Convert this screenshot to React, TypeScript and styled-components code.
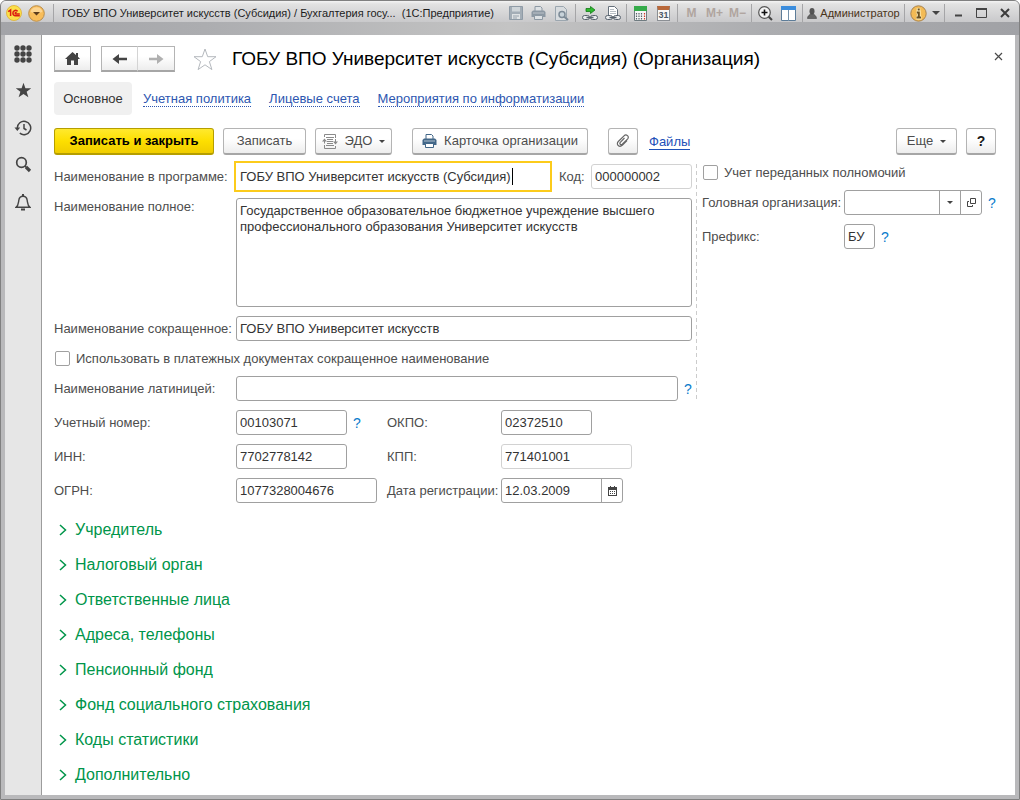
import React from "react";
import styled, { createGlobalStyle, css } from "styled-components";

const GlobalStyle = createGlobalStyle`
  *, *::before, *::after { box-sizing: border-box; }
  body { margin: 0; background: #ffffff; font-family: "Liberation Sans", Arial, sans-serif; font-size: 13px; line-height: 16px; color: #4d4d4d; }
  button, input, textarea { font: inherit; color: inherit; margin: 0; }
  svg { display: block; flex: none; }
`;

/* ---------- window frame ---------- */

const Window = styled.div`
  min-height: 100vh;
  display: flex;
  flex-direction: column;
  padding: 0 4px 4px;
  background: #b9b9bb;
  border: 1px solid #808080;
  border-radius: 6px 6px 0 0;
  overflow: hidden;
`;

const Caption = styled.header`
  display: flex;
  align-items: center;
  height: 34px;
  margin: 0 -4px;
  padding: 0 3px 10px 5px;
  background:
    linear-gradient(to bottom, #f4f4f4 0, #e2e2e2 3px, #c9c9cb 21px, transparent 21px),
    linear-gradient(to right, #a3a4a8 0, #acadb0 20%, #c4c4c4 50%, #acadb0 75%, #a1a2a6 100%);
  color: #1c1c1c;
  font-size: 12px;
`;

const CaptionButton = styled.button<{ $width?: number }>`
  display: flex;
  align-items: center;
  justify-content: center;
  flex: none;
  width: ${(p) => p.$width ?? 23}px;
  height: 22px;
  padding: 0;
  border: 0;
  background: none;
  font-size: 12px;
  font-weight: bold;
  color: #b0a59f;
`;

const Separator = styled.span`
  flex: none;
  width: 1px;
  height: 18px;
  margin: 0 2px;
  background: #a5a5a7;
`;

const WindowTitle = styled.div`
  flex: 1 1 0;
  min-width: 0;
  margin-left: 6px;
  overflow: hidden;
  white-space: pre;
  font-size: 11px;
`;

const UserButton = styled(CaptionButton)`
  width: 97px;
  gap: 3px;
  font-size: 11px;
  font-weight: normal;
  color: #4a3419;
`;

const Body = styled.div`
  flex: 1;
  display: flex;
  background: #ffffff;
`;

const Sidebar = styled.nav`
  flex: none;
  width: 37px;
  background: #e6e6e6;
  border-right: 1px solid #9c9c9c;
`;

const SideButton = styled.button`
  display: flex;
  align-items: center;
  justify-content: center;
  width: 36px;
  height: 37px;
  padding: 0;
  border: 0;
  background: none;
  color: #444444;
`;

const Page = styled.main`
  flex: 1;
  min-width: 0;
  padding: 11px 19px 0 12px;
`;

/* ---------- heading and tabs ---------- */

const Heading = styled.div`
  display: flex;
  align-items: center;
  height: 26px;
`;

const raised = css`
  border: 1px solid #b4b4b4;
  border-bottom: 2px solid #a6a6a6;
  background: linear-gradient(#ffffff 40%, #ededed);
`;

const NavButtons = styled.div`
  display: flex;
  margin-right: 10px;
`;

const NavButton = styled.button`
  ${raised}
  display: flex;
  align-items: center;
  justify-content: center;
  width: 37px;
  height: 26px;
  padding: 0;
  color: #444444;
  & + & { border-left: 0; color: #b0b0b0; }
  &:not(:last-child) { border-right-color: #d4d4d4; }
`;

const FavoriteButton = styled.button`
  margin: 0 15px 0 8px;
  padding: 0;
  border: 0;
  background: none;
`;

const PageTitle = styled.h1`
  flex: 1;
  margin: 0;
  font-size: 19px;
  line-height: 28px;
  font-weight: normal;
  color: #000000;
  white-space: nowrap;
`;

const CloseButton = styled.button`
  align-self: flex-start;
  width: 15px;
  height: 20px;
  margin-right: -10px;
  padding: 0;
  border: 0;
  background: none;
`;

const Tabs = styled.nav`
  display: flex;
  align-items: center;
  gap: 18px;
  margin-top: 10px;
`;

const CurrentTab = styled.span`
  width: 78px;
  margin-right: -7px;
  border-radius: 4px;
  background: #f0f0f0;
  line-height: 33px;
  text-align: center;
  white-space: nowrap;
  color: #333333;
`;

const TabLink = styled.a`
  border-bottom: 1px dotted #2d56b0;
  line-height: 15px;
  text-decoration: none;
  white-space: nowrap;
  color: #2d56b0;
`;

/* ---------- command bar ---------- */

const Commands = styled.div`
  display: flex;
  align-items: center;
  gap: 9px;
  margin-top: 13px;
`;

const Command = styled.button<{ $width: number; $primary?: boolean; $spaced?: boolean }>`
  ${raised}
  display: flex;
  align-items: center;
  justify-content: center;
  gap: 7px;
  flex: none;
  width: ${(p) => p.$width}px;
  height: 27px;
  margin-left: ${(p) => (p.$spaced ? 11 : 0)}px;
  padding: 0;
  border-radius: 3px;
  white-space: nowrap;
  ${(p) =>
    p.$primary &&
    css`
      border-color: #b59e00;
      background: linear-gradient(#ffe92e, #fddf00 50%, #f0cd00);
      font-weight: bold;
      color: #000000;
    `}
`;

const HelpCommand = styled(Command)`
  margin-left: 0;
  font-weight: bold;
  font-size: 14px;
  color: #1a1a1a;
`;

const FilesLink = styled.a`
  margin-left: 2px;
  border-bottom: 1px solid #1d50b8;
  line-height: 15px;
  text-decoration: none;
  color: #1d50b8;
`;

const Spacer = styled.span`
  flex: 1;
`;

/* ---------- form ---------- */

const Columns = styled.div`
  display: flex;
  margin-top: 9px;
`;

const MainColumn = styled.div`
  flex: 0 1 643px;
  display: flex;
  flex-direction: column;
  gap: 9px;
  padding-right: 5px;
  background: repeating-linear-gradient(to bottom, #cccccc 0 4px, transparent 4px 7px) right / 1px 100% no-repeat;
`;

const SideColumn = styled.div`
  display: flex;
  flex-direction: column;
  gap: 9px;
  padding-left: 5px;
`;

const Row = styled.div`
  display: flex;
  align-items: center;
`;

const Label = styled.label<{ $width: number; $top?: boolean }>`
  flex: none;
  width: ${(p) => p.$width}px;
  line-height: 17px;
  white-space: nowrap;
  ${(p) => p.$top && "align-self: flex-start;"}
`;

const fieldBox = css<{ $muted?: boolean }>`
  border: 1px solid ${(p) => (p.$muted ? "#d2d2d2" : "#a0a0a0")};
  border-radius: 3px;
  background: #ffffff;
  color: #333333;
  outline: none;
`;

const Field = styled.input<{ $width?: number; $muted?: boolean }>`
  ${fieldBox}
  ${(p) => (p.$width ? `flex: none; width: ${p.$width}px;` : "flex: 1; min-width: 0;")}
  height: 25px;
  padding: 0 3px;
`;

const ActiveBox = styled.div`
  position: relative;
  display: flex;
  flex: 1;
  min-width: 0;
  margin-right: 9px;
`;

const ActiveField = styled(Field)`
  height: 27px;
  margin: -1px 0;
  border-color: #ffffff;
  border-radius: 0;
  box-shadow: 0 0 0 2px #fccb1b;
`;

const Caret = styled.span`
  position: absolute;
  top: 4px;
  left: 276px;
  width: 1px;
  height: 17px;
  background: #000000;
`;

const TextArea = styled.textarea`
  ${fieldBox}
  flex: 1;
  min-width: 0;
  height: 109px;
  padding: 4px 3px;
  line-height: 16px;
  resize: none;
`;

const CheckLabel = styled.label`
  display: flex;
  align-items: center;
  gap: 6px;
  height: 17px;
  padding-left: 1px;
  white-space: nowrap;
`;

const CheckBox = styled.input.attrs({ type: "checkbox" })`
  appearance: none;
  width: 15px;
  height: 15px;
  border: 1px solid #a0a0a0;
  border-radius: 2px;
  background: #ffffff;
`;

const HintButton = styled.button`
  width: 14px;
  padding: 0 0 0 6px;
  border: 0;
  background: none;
  font-size: 14px;
  color: #0a7bcb;
`;

const ComboBox = styled.div`
  display: flex;
  height: 25px;
  ${fieldBox}
`;

const ComboInput = styled.input<{ $width: number }>`
  width: ${(p) => p.$width}px;
  padding: 0 3px;
  border: 0;
  background: none;
  outline: none;
`;

const ComboButton = styled.button`
  display: flex;
  align-items: center;
  justify-content: center;
  width: 21px;
  padding: 0;
  border: 0;
  border-left: 1px solid #a0a0a0;
  background: none;
`;

const Codes = styled.div`
  display: grid;
  grid-template-columns: 182px 151px 114px auto;
  row-gap: 9px;
  margin-top: 9px;
  align-items: center;
`;

/* ---------- collapsed groups ---------- */

const Groups = styled.div`
  margin-top: 9px;
`;

const Group = styled.button`
  display: flex;
  align-items: center;
  gap: 8px;
  height: 35px;
  padding: 0 0 0 5px;
  border: 0;
  background: none;
  font-size: 16px;
  color: #00954a;
`;

/* ---------- drawings ---------- */

const Arrow = ({ size = 6, color = "#444" }: { size?: number; color?: string }) => (
  <svg width={size} height={size / 2} viewBox="0 0 6 3"><path d="M0 0h6L3 3z" fill={color} /></svg>
);

const Logo = () => (
  <svg width="16" height="16" viewBox="0 0 16 16">
    <circle cx="8" cy="8" r="7.500" fill="#fbe04a" stroke="#e0b030" strokeWidth=".8" />
    <path d="M2.200 6.600 4.600 5v6M11.600 6.400C10.600 4.600 6.900 5 6.900 8c0 1.700 1.200 2.700 2.700 2.700h4.200M10.600 7.600C9.300 6.700 8.600 8.900 10 8.900h3.800" fill="none" stroke="#dc1e12" strokeWidth="1.500" />
  </svg>
);

const MenuBall = () => (
  <svg width="17" height="17" viewBox="0 0 17 17">
    <circle cx="8.500" cy="8.500" r="7.800" fill="#f8bd5a" stroke="#b98d4b" />
    <path d="M2.500 7a6.200 6.200 0 0 1 12 0q-6 2-12 0z" fill="#fcd591" />
    <path d="M5 7h7l-3.500 3.500z" fill="#5c3c1c" />
  </svg>
);

const SaveIcon = () => (
  <svg width="14" height="14" viewBox="0 0 14 14">
    <path d="M.5.500h13v13H.5z" fill="#a3adb6" stroke="#8f9ba6" />
    <path d="M3 1h8v4.500H3z" fill="#cfd5d9" /><path d="M3 8h8v5H3z" fill="#dfe2e4" />
    <path d="M4 10h6M4 12h4" stroke="#97a2ac" />
  </svg>
);

const PrinterIcon = ({ color = "#8c98a3", paper = "#dde1e4" }: { color?: string; paper?: string }) => (
  <svg width="15" height="14" viewBox="0 0 15 14">
    <path d="M4 5V.500h5.500L11 2v3" fill={paper} stroke={color} />
    <path d="M2 4.500h11l1.500 1.500v5H.5V6z" fill={color} />
    <path d="M2 7h11" stroke={paper} strokeWidth=".6" />
    <path d="M3.500 9.500h8v4h-8z" fill={paper} stroke={color} />
  </svg>
);

const PreviewIcon = () => (
  <svg width="14" height="15" viewBox="0 0 14 15">
    <path d="M.5.500h8l3 3v11H.5z" fill="#d8dcdf" stroke="#9ba6af" />
    <circle cx="7" cy="8.500" r="3" fill="#c8d3da" stroke="#7d8b97" strokeWidth="1.500" />
    <path d="m9 10.500 4 3.500" stroke="#7d8b97" strokeWidth="2" />
  </svg>
);

const ChainLinks = () => (
  <g fill="#e9ebed" stroke="#59636e">
    <rect x=".5" y="9.500" width="7" height="4" rx="2" /><rect x="8.500" y="9.500" width="7" height="4" rx="2" />
    <path d="M4.500 11.500h7" strokeWidth="1.500" />
  </g>
);

const LinkOutIcon = () => (
  <svg width="16" height="15" viewBox="0 0 16 15">
    <ChainLinks />
    <path d="M4 2.500h4.500v-2L13 4 8.500 7.500v-2H4z" fill="#2fba2f" stroke="#127a17" strokeWidth=".8" />
  </svg>
);

const LinkPageIcon = () => (
  <svg width="16" height="15" viewBox="0 0 16 15">
    <path d="M3.500 11V.500h6l3 3V11z" fill="#fff" stroke="#66717c" />
    <path d="M5 3.500h4M5 5.500h6M5 7.500h6" stroke="#b7bec4" />
    <ChainLinks />
  </svg>
);

const CalculatorIcon = () => (
  <svg width="13" height="15" viewBox="0 0 13 15">
    <path d="M.5.500h12v14H.5z" fill="#f6f7f7" stroke="#6f7b80" />
    <path d="M0 0h13v5H0z" fill="#35ab4a" />
    <path d="M2.500 7v6.500M5 7v6.500M7.500 7v6.500" stroke="#59636a" strokeWidth="1.200" strokeDasharray="1.500 1" />
    <path d="M10.500 7v6.500" stroke="#d33a2a" strokeWidth="1.200" strokeDasharray="1.500 1" />
  </svg>
);

const DayBox = styled.span`
  width: 13px;
  height: 15px;
  border: 1px solid #8b8f94;
  border-top: 4px solid #b9683a;
  background: #f8f8f8;
  font-size: 9px;
  font-weight: bold;
  line-height: 10px;
  text-align: center;
  color: #4b5868;
  display: flex;
  justify-content: center;
`;

const ZoomIcon = () => (
  <svg width="15" height="15" viewBox="0 0 15 15">
    <circle cx="6.500" cy="6.500" r="5.800" fill="#f4f4f4" stroke="#555" strokeWidth="1.200" />
    <path d="M3.500 6.500h6M6.500 3.500v6" stroke="#111" strokeWidth="1.600" />
    <path d="m10.700 10.700 3.300 3.300" stroke="#444" strokeWidth="2" />
  </svg>
);

const PanelsIcon = () => (
  <svg width="15" height="15" viewBox="0 0 15 15">
    <path d="M.5.500h14v14H.5z" fill="#fff" stroke="#5d7c98" />
    <path d="M0 0h15v4H0z" fill="#3b8ddd" /><path d="M7.500 4v11" stroke="#7592ab" />
  </svg>
);

const UserIcon = () => (
  <svg width="10" height="11" viewBox="0 0 10 11">
    <ellipse cx="5" cy="3.200" rx="2.500" ry="3.200" fill="#555" /><path d="M.5 10.500C.5 7.500 3 7 3.500 6h3c.5 1 3 1.500 3 4.500z" fill="#666" stroke="#444" strokeWidth=".6" />
  </svg>
);

const InfoIcon = () => (
  <svg width="17" height="17" viewBox="0 0 17 17">
    <circle cx="8.500" cy="8.500" r="7.700" fill="#f3bb55" stroke="#a78350" />
    <path d="M8.500 3.200v2.600M6.500 7.200h2.300v5.300M6.300 12.600h5" fill="none" stroke="#fff3c4" strokeWidth="3.600" />
    <path d="M8.700 3.400v2.200M6.800 7.400h2v5M6.500 12.600h4.500" fill="none" stroke="#6a5020" strokeWidth="2" />
  </svg>
);

const Star = ({ outline }: { outline?: boolean }) => {
  const d = "M12 1l2.700 7.700h8.300l-6.600 4.900 2.500 8L12 16.800l-6.900 4.800 2.500-8L1 8.700h8.300z";
  return outline ? (
    <svg width="24" height="24" viewBox="0 -1 24 24"><path d={d} fill="#fff" stroke="#b4b8bd" /></svg>
  ) : (
    <svg width="17" height="17" viewBox="0 0 24 24"><path d={d} fill="#444" /></svg>
  );
};

const GridIcon = () => (
  <svg width="18" height="18" viewBox="0 0 18 18" fill="#444">
    {[3, 9, 15].map((y) => [3, 9, 15].map((x) => <circle key={`${x}-${y}`} cx={x} cy={y} r="2.700" />))}
  </svg>
);

const HistoryIcon = () => (
  <svg width="18" height="18" viewBox="0 0 18 18" fill="none" stroke="#444" strokeWidth="1.500">
    <path d="M3.300 9a6.700 6.700 0 1 1 2.500 5.200" /><path d="M10 5v4.500l2.500 1.500" />
    <path d="M.5 8.500h5.700L3.300 12z" fill="#444" stroke="none" />
  </svg>
);

const SearchIcon = () => (
  <svg width="17" height="17" viewBox="0 0 17 17" fill="none" stroke="#444">
    <circle cx="6.500" cy="6.500" r="4.800" strokeWidth="1.700" /><path d="m10 10 1.500 1.500" strokeWidth="1.500" /><path d="m11 11 4 4" strokeWidth="3.200" />
  </svg>
);

const BellIcon = () => (
  <svg width="16" height="18" viewBox="0 0 16 18" fill="none" stroke="#444" strokeWidth="1.400">
    <path d="M1 14.300c2.500-1.800 2.300-4 2.800-7C4.200 4.500 6 3.300 8 3.300s3.800 1.200 4.200 4c.5 3 .3 5.200 2.800 7z" />
    <path d="M8 3V1" strokeWidth="2" /><path d="M6 16.500h4" strokeWidth="1.800" />
  </svg>
);

const HomeIcon = () => (
  <svg width="15" height="13" viewBox="0 0 15 13"><path d="M7.500 0 11 3V1h2v3.700L15 7h-2v6H9V8.500H6V13H2V7H0z" fill="#444" /></svg>
);

const BackIcon = ({ flip }: { flip?: boolean }) => (
  <svg width="15" height="12" viewBox="0 0 15 12">
    <path
      d={flip ? "M0 4.800h8V1l6.500 5L8 11V7.200H0z" : "M15 4.800H7V1L.5 6 7 11V7.200h8z"}
      fill="currentColor"
    />
  </svg>
);

const CrossIcon = () => (
  <svg width="15" height="20" viewBox="0 0 15 20"><path d="m4 7 7 7M11 7l-7 7" stroke="#4a4a4a" strokeWidth="1.200" /></svg>
);

const ExchangeIcon = () => (
  <svg width="16" height="15" viewBox="0 0 16 15" fill="none" stroke="#8a8a8a">
    <path d="M2.500 3V.500h11V4M2.500 11v3.500h11V12" /><path d="M4 3.500h8M5 5.500h6M5 7.500h6M5 9.500h6M4 11.500h8" />
    <path d="M2.500 9.500V6M13.500 5v4" /><path d="M0 7.500 2.500 4.500 5 7.500zM11 7.500h5L13.500 10.500z" fill="#8a8a8a" stroke="none" />
  </svg>
);

const ClipIcon = () => (
  <svg width="14" height="14" viewBox="0 0 14 14" fill="none" stroke="#666" strokeWidth="1.200">
    <path d="M11 6.500 6.500 11C3.500 14-.5 10.500 2.300 7.500L8 1.800c2.300-2.300 5.700.8 3.700 3L6.300 10.200c-1.500 1.300-3.200-.5-2-1.900L8.500 4" />
  </svg>
);

const OpenIcon = () => (
  <svg width="11" height="11" viewBox="0 0 11 11" fill="none" stroke="#444"><path d="M4.500 1.500h5v5h-5zM3 4.500H1.500v5h5V8" /></svg>
);

const CalendarIcon = () => (
  <svg width="9" height="10" viewBox="0 0 9 10" shapeRendering="crispEdges">
    <path d="M.5 1.500h8v8h-8z" fill="#fff" stroke="#444" /><path d="M0 1h9v3H0zM2 0h1v1H2zM6 0h1v1H6z" fill="#444" />
    <path d="M2 5.500h5M2 7.500h5" stroke="#444" strokeDasharray="1 1" />
  </svg>
);

const Chevron = () => (
  <svg width="8" height="12" viewBox="0 0 8 12"><path d="m1 1 5.500 5L1 11" fill="none" stroke="#00954a" strokeWidth="1.500" /></svg>
);

const groups = [
  "Учредитель",
  "Налоговый орган",
  "Ответственные лица",
  "Адреса, телефоны",
  "Пенсионный фонд",
  "Фонд социального страхования",
  "Коды статистики",
  "Дополнительно",
];

export default function App() {
  return (
    <>
      <GlobalStyle />
      <Window>
        <Caption>
          <CaptionButton $width={16} aria-label="1С"><Logo /></CaptionButton>
          <CaptionButton $width={29} aria-label="Меню"><MenuBall /></CaptionButton>
          <Separator />
          <WindowTitle>{"ГОБУ ВПО Университет искусств (Субсидия) / Бухгалтерия госу...  (1С:Предприятие)"}</WindowTitle>
          <CaptionButton aria-label="Сохранить"><SaveIcon /></CaptionButton>
          <CaptionButton aria-label="Печать"><PrinterIcon /></CaptionButton>
          <CaptionButton aria-label="Просмотр"><PreviewIcon /></CaptionButton>
          <Separator />
          <CaptionButton aria-label="Перейти по ссылке"><LinkOutIcon /></CaptionButton>
          <CaptionButton aria-label="Получить ссылку"><LinkPageIcon /></CaptionButton>
          <Separator />
          <CaptionButton aria-label="Калькулятор"><CalculatorIcon /></CaptionButton>
          <CaptionButton aria-label="Календарь"><DayBox>31</DayBox></CaptionButton>
          <Separator />
          <CaptionButton>M</CaptionButton>
          <CaptionButton>M+</CaptionButton>
          <CaptionButton>M−</CaptionButton>
          <Separator />
          <CaptionButton aria-label="Масштаб"><ZoomIcon /></CaptionButton>
          <CaptionButton aria-label="Панели"><PanelsIcon /></CaptionButton>
          <Separator />
          <UserButton><UserIcon />Администратор</UserButton>
          <Separator />
          <CaptionButton aria-label="Информация"><InfoIcon /></CaptionButton>
          <CaptionButton $width={12} aria-label="Ещё команды"><Arrow size={8} color="#444" /></CaptionButton>
          <Separator />
          <CaptionButton aria-label="Свернуть"><svg width="8" height="8"><path d="M0 6.500h7" stroke="#444" strokeWidth="2" /></svg></CaptionButton>
          <CaptionButton aria-label="Развернуть"><svg width="11" height="10"><path d="M.5 1h10v8.500H.5z" fill="none" stroke="#444" /><path d="M0 1h11" stroke="#444" strokeWidth="2" /></svg></CaptionButton>
          <CaptionButton aria-label="Закрыть"><svg width="10" height="10"><path d="m1 1 8 8M9 1 1 9" stroke="#3c3c3c" strokeWidth="2" /></svg></CaptionButton>
        </Caption>
        <Body>
          <Sidebar>
            <SideButton aria-label="Разделы"><GridIcon /></SideButton>
            <SideButton aria-label="Избранное"><Star /></SideButton>
            <SideButton aria-label="История"><HistoryIcon /></SideButton>
            <SideButton aria-label="Поиск"><SearchIcon /></SideButton>
            <SideButton aria-label="Оповещения"><BellIcon /></SideButton>
          </Sidebar>
          <Page>
            <Heading>
              <NavButtons><NavButton aria-label="Домой"><HomeIcon /></NavButton></NavButtons>
              <NavButtons>
                <NavButton aria-label="Назад"><BackIcon /></NavButton>
                <NavButton aria-label="Вперед"><BackIcon flip /></NavButton>
              </NavButtons>
              <FavoriteButton aria-label="В избранное"><Star outline /></FavoriteButton>
              <PageTitle>ГОБУ ВПО Университет искусств (Субсидия) (Организация)</PageTitle>
              <CloseButton aria-label="Закрыть форму"><CrossIcon /></CloseButton>
            </Heading>
            <Tabs>
              <CurrentTab>Основное</CurrentTab>
              <TabLink href="#policy">Учетная политика</TabLink>
              <TabLink href="#accounts">Лицевые счета</TabLink>
              <TabLink href="#events">Мероприятия по информатизации</TabLink>
            </Tabs>
            <Commands>
              <Command $width={160} $primary>Записать и закрыть</Command>
              <Command $width={83}>Записать</Command>
              <Command $width={77}><ExchangeIcon />ЭДО<Arrow /></Command>
              <Command $width={176} $spaced><PrinterIcon color="#426788" paper="#ffffff" />Карточка организации</Command>
              <Command $width={30} $spaced aria-label="Прикрепленные файлы"><ClipIcon /></Command>
              <FilesLink href="#files">Файлы</FilesLink>
              <Spacer />
              <Command $width={61}>Еще<Arrow /></Command>
              <HelpCommand $width={30}>?</HelpCommand>
            </Commands>
            <Columns>
              <MainColumn>
                <Row>
                  <Label $width={182} htmlFor="name">Наименование в программе:</Label>
                  <ActiveBox>
                    <ActiveField id="name" defaultValue="ГОБУ ВПО Университет искусств (Субсидия)" />
                    <Caret />
                  </ActiveBox>
                  <Label $width={32} htmlFor="code">Код:</Label>
                  <Field id="code" $width={101} $muted readOnly value="000000002" />
                </Row>
                <Row>
                  <Label $width={182} $top htmlFor="full">Наименование полное:</Label>
                  <TextArea id="full" defaultValue="Государственное образовательное бюджетное учреждение высшего профессионального образования Университет искусств" />
                </Row>
                <Row>
                  <Label $width={182} htmlFor="short">Наименование сокращенное:</Label>
                  <Field id="short" defaultValue="ГОБУ ВПО Университет искусств" />
                </Row>
                <CheckLabel><CheckBox />Использовать в платежных документах сокращенное наименование</CheckLabel>
                <Row>
                  <Label $width={182} htmlFor="latin">Наименование латиницей:</Label>
                  <Field id="latin" />
                  <HintButton>?</HintButton>
                </Row>
              </MainColumn>
              <SideColumn>
                <CheckLabel><CheckBox />Учет переданных полномочий</CheckLabel>
                <Row>
                  <Label $width={142} htmlFor="head">Головная организация:</Label>
                  <ComboBox>
                    <ComboInput id="head" $width={94} />
                    <ComboButton aria-label="Выбрать"><Arrow /></ComboButton>
                    <ComboButton aria-label="Открыть"><OpenIcon /></ComboButton>
                  </ComboBox>
                  <HintButton>?</HintButton>
                </Row>
                <Row>
                  <Label $width={142} htmlFor="prefix">Префикс:</Label>
                  <Field id="prefix" $width={31} defaultValue="БУ" />
                  <HintButton>?</HintButton>
                </Row>
              </SideColumn>
            </Columns>
            <Codes>
              <Label $width={182} htmlFor="account">Учетный номер:</Label>
              <Row><Field id="account" $width={111} defaultValue="00103071" /><HintButton>?</HintButton></Row>
              <Label $width={114} htmlFor="okpo">ОКПО:</Label>
              <Row><Field id="okpo" $width={91} defaultValue="02372510" /></Row>
              <Label $width={182} htmlFor="inn">ИНН:</Label>
              <Row><Field id="inn" $width={111} defaultValue="7702778142" /></Row>
              <Label $width={114} htmlFor="kpp">КПП:</Label>
              <Row><Field id="kpp" $width={131} $muted readOnly value="771401001" /></Row>
              <Label $width={182} htmlFor="ogrn">ОГРН:</Label>
              <Row><Field id="ogrn" $width={141} defaultValue="1077328004676" /></Row>
              <Label $width={114} htmlFor="date">Дата регистрации:</Label>
              <Row>
                <ComboBox>
                  <ComboInput id="date" $width={99} defaultValue="12.03.2009" />
                  <ComboButton aria-label="Календарь"><CalendarIcon /></ComboButton>
                </ComboBox>
              </Row>
            </Codes>
            <Groups>
              {groups.map((g) => (
                <Group key={g} aria-expanded={false}><Chevron />{g}</Group>
              ))}
            </Groups>
          </Page>
        </Body>
      </Window>
    </>
  );
}
